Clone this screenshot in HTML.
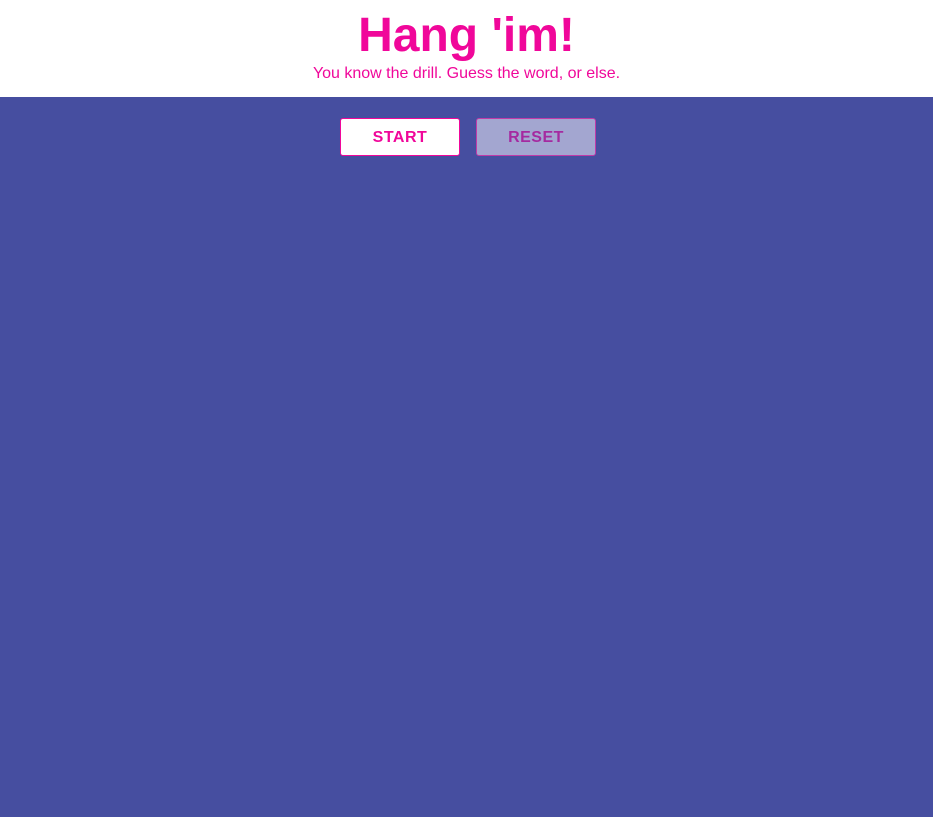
<!DOCTYPE html>
<html><head><meta charset="utf-8"><style>
html,body{margin:0;padding:0;width:933px;height:817px;background:#464ea0;font-family:"Liberation Sans",Arial,sans-serif;overflow:hidden}
header{background:#fff;height:97px;position:relative;text-align:center;color:#f0079a}
h1{margin:0;position:absolute;top:8px;left:0;width:100%;font-size:48px;font-weight:bold;line-height:56px}
p{margin:0;position:absolute;top:65px;left:0;width:100%;font-size:16px;line-height:18px}
.b{position:absolute;top:118px;width:118px;height:36px;border:1px solid #f0079a;border-radius:3px;box-sizing:content-box;text-align:center;line-height:38px;font-weight:bold;font-size:16px;letter-spacing:0.5px}
.s{left:340px;background:#fff;color:#f0079a}
.r{left:476px;background:#a3a6d0;color:#a52aa0;border-color:#c03aa8}
</style></head><body>
<header><h1>Hang 'im!</h1><p>You know the drill. Guess the word, or else.</p></header>
<div class="b s">START</div><div class="b r">RESET</div>
</body></html>
